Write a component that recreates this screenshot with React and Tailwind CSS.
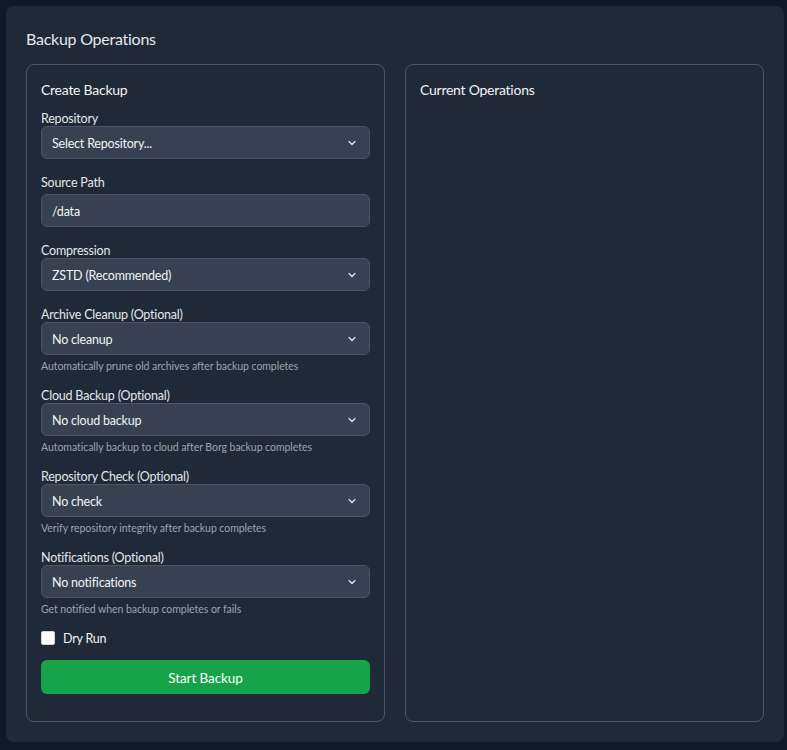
import React from "react";

const Chevron = () => (
  <svg width="12" height="12" viewBox="0 0 20 20" fill="none" className="shrink-0">
    <path d="M5 7.5l5 5 5-5" stroke="#e5e7eb" strokeWidth="2" strokeLinecap="round" strokeLinejoin="round" />
  </svg>
);

const Select = ({ value }) => (
  <div className="flex h-[33px] items-center justify-between rounded-md border border-[#4b5563] bg-[#374151] pl-[10px] pr-[11px] text-[12.5px] tracking-[-0.2px] text-[#f3f4f6]">
    <span className="pt-[3px]">{value}</span>
    <Chevron />
  </div>
);

const Field = ({ label, value, help }) => (
  <div className={help ? "mb-[11px]" : "mb-[13px]"}>
    <div className="h-[18px] text-[12.5px] leading-[21px] tracking-[-0.2px] text-[#e5e7eb]">{label}</div>
    <Select value={value} />
    {help && <div className="mt-[3px] text-[10.5px] leading-[16px] tracking-[-0.05px] text-[#9ca3af]">{help}</div>}
  </div>
);

export default function App() {
  return (
    <div className="min-h-[750px] bg-[#111827] pt-[6px] pl-[6px]" style={{ fontFamily: "Lato, 'Noto Sans', sans-serif" }}>
      <div className="h-[736px] w-[778px] rounded-lg bg-[#1f2937] px-5 pt-5 pb-5 flex flex-col">
        <h1 className="text-[16px] leading-[26px] tracking-[-0.25px] text-[#e5e7eb] mb-[2px]">Backup Operations</h1>
        <div className="mt-[10px] grid flex-1 grid-cols-2 gap-5">
          <div className="rounded-lg border border-[#4b5563] px-[14px] pt-[13px]">
            <h2 className="text-[14px] leading-[24px] tracking-[-0.25px] text-[#f3f4f6] mb-[6px]">Create Backup</h2>
            <Field label="Repository" value="Select Repository..." />
            <div className="mb-[13px]">
              <div className="h-[18px] text-[12.5px] leading-[21px] tracking-[-0.2px] text-[#e5e7eb]">Source Path</div>
              <div className="mt-[4px] flex h-[33px] items-center rounded-md border border-[#4b5563] bg-[#374151] pl-[10px] text-[12.5px] tracking-[-0.2px] text-[#f3f4f6]">
                <span className="pt-[3px]">/data</span>
              </div>
            </div>
            <Field label="Compression" value="ZSTD (Recommended)" />
            <Field label="Archive Cleanup (Optional)" value="No cleanup" help="Automatically prune old archives after backup completes" />
            <Field label="Cloud Backup (Optional)" value="No cloud backup" help="Automatically backup to cloud after Borg backup completes" />
            <Field label="Repository Check (Optional)" value="No check" help="Verify repository integrity after backup completes" />
            <Field label="Notifications (Optional)" value="No notifications" help="Get notified when backup completes or fails" />
            <label className="mt-[3px] flex items-center gap-2 text-[12.5px] tracking-[-0.2px] text-[#f3f4f6]">
              <span className="block h-[14px] w-[14px] rounded-[2px] border border-[#d1d5db] bg-white" />
              <span className="pt-[2px]">Dry Run</span>
            </label>
            <button className="mt-[11px] h-[34px] w-full rounded-md bg-[#16a34a] pt-[2px] text-[13.5px] tracking-[-0.1px] text-white">Start Backup</button>
          </div>
          <div className="rounded-lg border border-[#4b5563] px-[14px] pt-[13px]">
            <h2 className="text-[14px] leading-[24px] tracking-[-0.25px] text-[#f3f4f6]">Current Operations</h2>
          </div>
        </div>
      </div>
    </div>
  );
}
